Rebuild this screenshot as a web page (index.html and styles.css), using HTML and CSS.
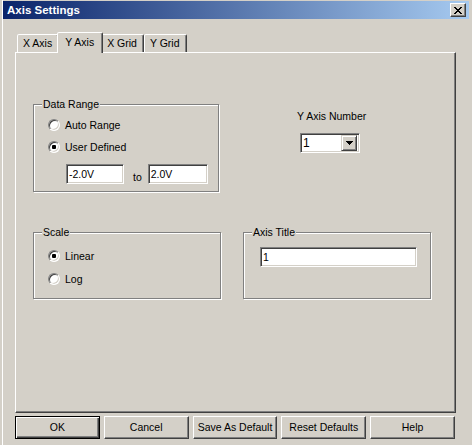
FILE: index.html
```html
<!DOCTYPE html>
<html>
<head>
<meta charset="utf-8">
<title>Axis Settings</title>
<link rel="stylesheet" href="styles.css">
</head>
<body>
<div class="window">
  <div class="titlebar">
    <span class="title">Axis Settings</span>
    <span class="close">
      <svg width="8" height="7" viewBox="0 0 8 7" shape-rendering="crispEdges">
        <path fill="#000" d="M0 0h2v1H0zM6 0h2v1H6zM1 1h2v1H1zM5 1h2v1H5zM2 2h4v1H2zM3 3h2v1H3zM2 4h4v1H2zM1 5h2v1H1zM5 5h2v1H5zM0 6h2v1H0zM6 6h2v1H6z"/>
      </svg>
    </span>
  </div>
  <div class="tabs">
    <div class="tab">X Axis</div>
    <div class="tab active">Y Axis</div>
    <div class="tab">X Grid</div>
    <div class="tab">Y Grid</div>
  </div>
  <div class="pane">
    <div class="group range">
      <span class="legend">Data Range</span>
      <div class="opt"><span class="radio"></span><span>Auto Range</span></div>
      <div class="opt"><span class="radio on"></span><span>User Defined</span></div>
      <div class="limits">
        <div class="field w58">-2.0V</div>
        <span class="to">to</span>
        <div class="field w60">2.0V</div>
      </div>
    </div>
    <div class="axisnum">
      <span class="label">Y Axis Number</span>
      <div class="combo">
        <span class="combo-val">1</span>
        <span class="combo-btn">
          <svg width="7" height="4" viewBox="0 0 7 4" shape-rendering="crispEdges">
            <path fill="#000" d="M0 0h7v1H0zM1 1h5v1H1zM2 2h3v1H2zM3 3h1v1H3z"/>
          </svg>
        </span>
      </div>
    </div>
    <div class="group scale">
      <span class="legend">Scale</span>
      <div class="opt tall"><span class="radio on"></span><span>Linear</span></div>
      <div class="opt tall"><span class="radio"></span><span>Log</span></div>
    </div>
    <div class="group title-group">
      <span class="legend">Axis Title</span>
      <div class="field w157">1</div>
    </div>
  </div>
  <div class="buttons">
    <div class="btn default">OK</div>
    <div class="btn">Cancel</div>
    <div class="btn">Save As Default</div>
    <div class="btn">Reset Defaults</div>
    <div class="btn">Help</div>
  </div>
</div>
</body>
</html>
```
FILE: styles.css
```css
html, body {
  margin: 0;
  padding: 0;
}
body {
  width: 472px;
  height: 445px;
  overflow: hidden;
  background: #d4d0c8;
  font-family: "Liberation Sans", Arial, sans-serif;
  font-size: 10.5px;
  color: #000;
}
.window {
  box-sizing: border-box;
  height: 445px;
  margin-left: 2px;
  border-left: 1px solid #fff;
  padding-top: 1px;
  padding-right: 3px;
}
.titlebar {
  height: 18px;
  display: flex;
  align-items: center;
  justify-content: space-between;
  padding: 0 3px 0 4px;
  background: linear-gradient(to right, #0a246a, #a6caf0);
  color: #fff;
}
.title {
  font-weight: bold;
  font-size: 11.5px;
}
.close {
  box-sizing: border-box;
  width: 16px;
  height: 14px;
  background: #d4d0c8;
  border: 1px solid;
  border-color: #fff #404040 #404040 #fff;
  box-shadow: inset -1px -1px 0 #808080;
  display: flex;
  align-items: center;
  justify-content: center;
}
.close svg { display: block; }
.tabs {
  display: flex;
  align-items: flex-end;
  height: 20px;
  margin-top: 13px;
  margin-left: 14px;
  position: relative;
  z-index: 1;
}
.tab {
  box-sizing: border-box;
  height: 18px;
  line-height: 17px;
  padding: 0 6px 0 5px;
  border: 1px solid;
  border-bottom: none;
  border-color: #fff #404040 transparent #fff;
  border-radius: 2px 2px 0 0;
  box-shadow: inset -1px 0 0 #808080;
  background: #d4d0c8;
  white-space: nowrap;
}
.tab.active {
  height: 21px;
  line-height: 19px;
  margin: 0 -2px -1px;
  padding: 0 8px 0 7px;
  position: relative;
  z-index: 2;
}
.pane {
  box-sizing: border-box;
  width: 441px;
  height: 361px;
  margin-left: 12px;
  border: 1px solid;
  border-color: #fff #404040 #404040 #fff;
  box-shadow: inset -1px -1px 0 #808080;
  padding: 51px 0 0 17px;
  display: grid;
  grid-template-columns: 188px 188px;
  grid-template-rows: 88px 67px;
  column-gap: 22px;
  row-gap: 40px;
  align-content: start;
}
.group {
  position: relative;
  box-sizing: border-box;
  border: 1px solid #808080;
  box-shadow: inset 1px 1px 0 #fff, 1px 1px 0 #fff;
}
.legend {
  position: absolute;
  top: -7px;
  left: 8px;
  padding: 0 1px;
  line-height: 13px;
  background: #d4d0c8;
}
.range {
  width: 186px;
  padding: 9px 0 0 14px;
}
.scale {
  padding: 11px 0 0 14px;
}
.title-group {
  padding: 14px 0 0 16px;
}
.opt {
  display: flex;
  align-items: center;
  gap: 5px;
  height: 22px;
}
.opt.tall {
  height: 23px;
}
.radio {
  position: relative;
  box-sizing: border-box;
  width: 12px;
  height: 12px;
  border-radius: 50%;
  border: 1px solid;
  border-color: #808080 #fff #fff #808080;
  background: #fff;
  box-shadow: inset 1px 1px 0 #404040, inset -1px -1px 0 #d4d0c8;
}
.radio.on::after {
  content: "";
  position: absolute;
  left: 3px;
  top: 3px;
  width: 4px;
  height: 4px;
  border-radius: 1px;
  background: #000;
}
.limits {
  display: flex;
  align-items: center;
  margin: 6px 0 0 18px;
}
.to {
  margin: 0 6px 0 9px;
  padding-top: 6px;
}
.field {
  box-sizing: border-box;
  height: 20px;
  line-height: 16px;
  background: #fff;
  border: 1px solid;
  border-color: #808080 #fff #fff #808080;
  box-shadow: inset 1px 1px 0 #404040, inset -1px -1px 0 #d4d0c8;
  padding-top: 1px;
  padding-left: 2px;
}
.w58 { width: 58px; }
.w60 { width: 60px; }
.w157 { width: 157px; }
.axisnum {
  display: flex;
  flex-direction: column;
  align-items: flex-start;
  padding-left: 54px;
}
.label {
  margin-top: 6px;
  line-height: 13px;
}
.combo {
  box-sizing: border-box;
  width: 60px;
  height: 20px;
  margin: 10px 0 0 3px;
  display: flex;
  align-items: center;
  justify-content: space-between;
  background: #fff;
  border: 1px solid;
  border-color: #808080 #fff #fff #808080;
  box-shadow: inset 1px 1px 0 #404040, inset -1px -1px 0 #d4d0c8;
  padding: 2px;
  font-size: 12px;
}
.combo-val {
  line-height: 16px;
}
.combo-btn {
  box-sizing: border-box;
  width: 16px;
  height: 16px;
  background: #d4d0c8;
  border: 1px solid;
  border-color: #d4d0c8 #404040 #404040 #d4d0c8;
  box-shadow: inset 1px 1px 0 #fff, inset -1px -1px 0 #808080;
  display: flex;
  align-items: center;
  justify-content: center;
}
.combo-btn svg { display: block; }
.buttons {
  display: grid;
  grid-template-columns: repeat(5, 1fr);
  column-gap: 4px;
  width: 440px;
  margin: 3px 0 0 12px;
}
.btn {
  box-sizing: border-box;
  height: 23px;
  line-height: 21px;
  text-align: center;
  border: 1px solid;
  border-color: #fff #404040 #404040 #fff;
  box-shadow: inset -1px -1px 0 #808080;
  white-space: nowrap;
}
.btn.default {
  border-color: #000;
  box-shadow: inset 1px 1px 0 #fff, inset -1px -1px 0 #404040, inset -2px -2px 0 #808080;
}
```
